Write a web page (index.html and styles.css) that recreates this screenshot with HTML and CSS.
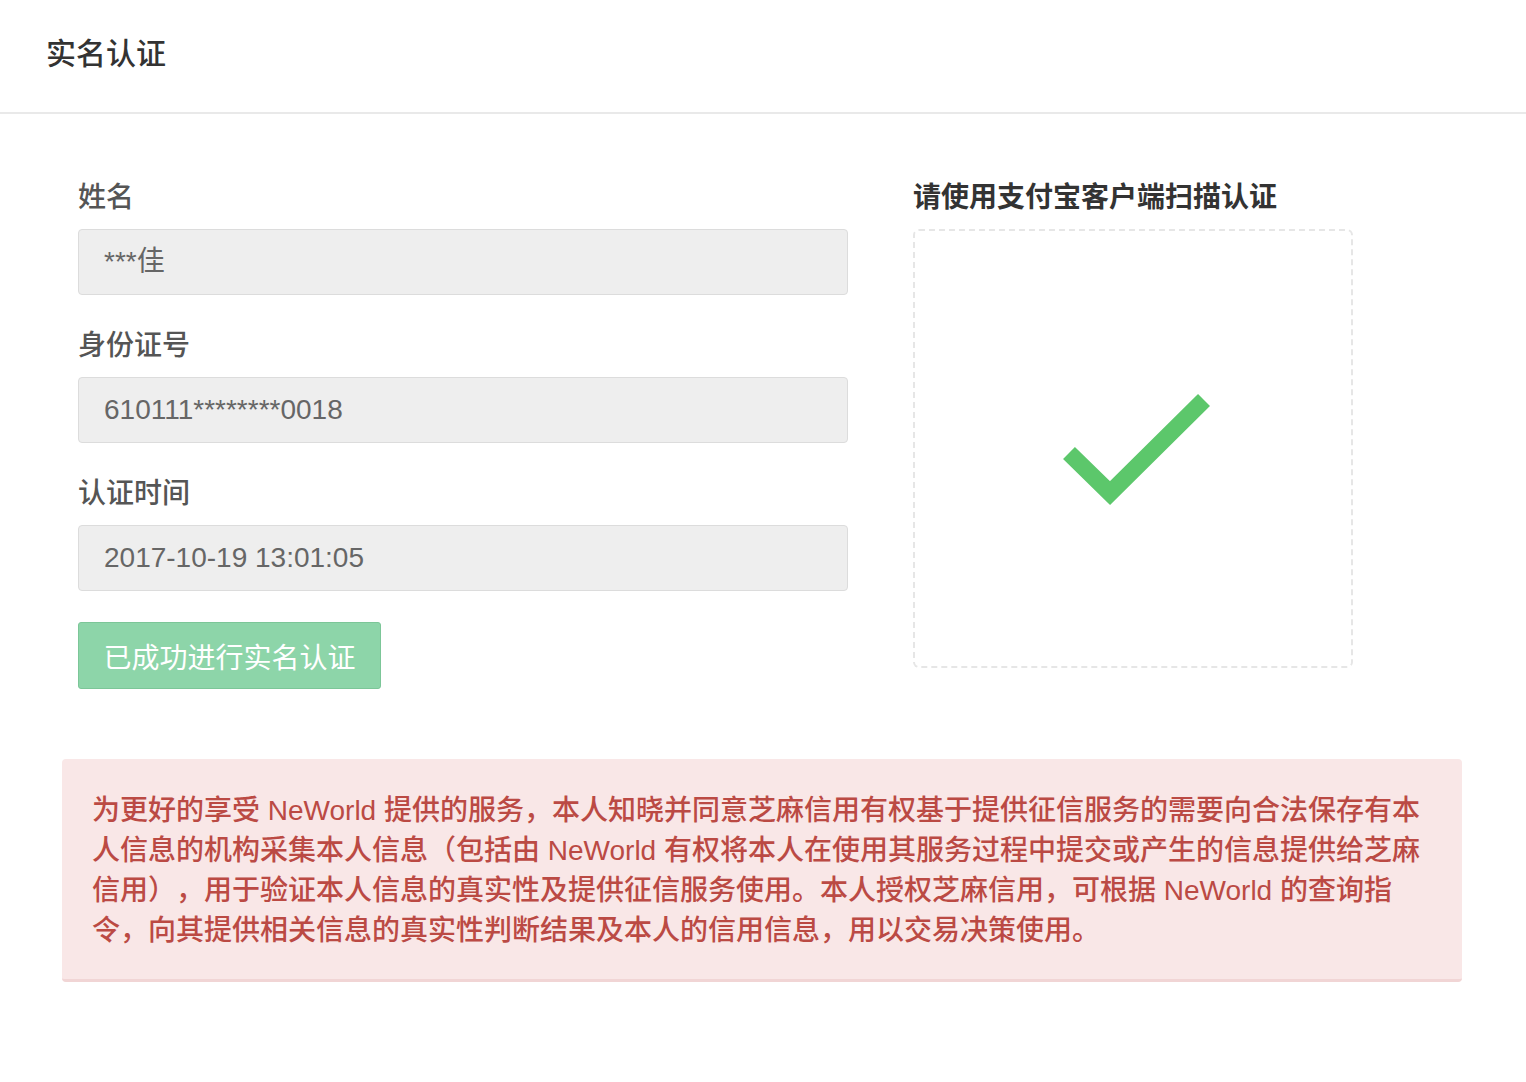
FILE: index.html
```html
<!DOCTYPE html>
<html lang="zh-CN">
<head>
<meta charset="utf-8">
<title>实名认证</title>
<link rel="stylesheet" href="styles.css">
</head>
<body>
<header class="page-header">
  <h1 class="page-title">实名认证</h1>
</header>
<main class="page-main">
  <section class="verify-row">
    <div class="form-col">
      <div class="field">
        <div class="field-label">姓名</div>
        <div class="field-input">***佳</div>
      </div>
      <div class="field">
        <div class="field-label">身份证号</div>
        <div class="field-input">610111********0018</div>
      </div>
      <div class="field">
        <div class="field-label">认证时间</div>
        <div class="field-input">2017-10-19 13:01:05</div>
      </div>
      <button class="btn-success" type="button">已成功进行实名认证</button>
    </div>
    <div class="qr-col">
      <div class="field-label qr-title">请使用支付宝客户端扫描认证</div>
      <div class="qr-box">
        <svg class="check" width="150" height="114" viewBox="0 0 150 114" aria-hidden="true">
          <polyline points="8,60 49,100 143,7" fill="none" stroke="#5cc76b" stroke-width="17" stroke-linecap="butt" stroke-linejoin="miter"/>
        </svg>
      </div>
    </div>
  </section>
  <div class="alert">为更好的享受 NeWorld 提供的服务，本人知晓并同意芝麻信用有权基于提供征信服务的需要向合法保存有本人信息的机构采集本人信息（包括由 NeWorld 有权将本人在使用其服务过程中提交或产生的信息提供给芝麻信用），用于验证本人信息的真实性及提供征信服务使用。本人授权芝麻信用，可根据 NeWorld 的查询指令，向其提供相关信息的真实性判断结果及本人的信用信息，用以交易决策使用。</div>
</main>
</body>
</html>
```

FILE: styles.css
```css
* { box-sizing: border-box; }
html, body {
  margin: 0;
  padding: 0;
  background: #fff;
}
body {
  font-family: "Liberation Sans", "Noto Sans CJK SC", sans-serif;
  color: #333;
  text-spacing-trim: space-all;
}
.page-header {
  height: 114px;
  border-bottom: 2px solid #e9e9e9;
  display: flex;
  align-items: center;
  padding: 0 46px 0 46px;
}
.page-title {
  margin: 0 0 4px 0;
  font-size: 30px;
  line-height: 40px;
  font-weight: 500;
  color: #333;
}
.page-main {
  padding: 64px 62px 60px 62px;
}
.verify-row {
  display: flex;
  gap: 65px;
  padding-left: 16px;
}
.form-col {
  width: 770px;
  display: flex;
  flex-direction: column;
}
.field {
  margin-bottom: 31px;
}
.field-label {
  font-size: 28px;
  line-height: 40px;
  font-weight: 500;
  color: #555;
  margin-bottom: 11px;
}
.field-input {
  height: 66px;
  background: #eee;
  border: 1px solid #dcdcdc;
  border-radius: 4px;
  padding: 0 25px;
  font-size: 28px;
  line-height: 64px;
  color: #666;
}
.btn-success {
  align-self: flex-start;
  width: 303px;
  height: 67px;
  background: #8dd5a9;
  border: 1px solid #7cc698;
  border-radius: 3px;
  color: #fff;
  font-family: inherit;
  font-size: 28px;
  padding: 0;
  margin: 0;
}
.qr-col {
  width: 440px;
}
.qr-title {
  color: #333;
  font-weight: 600;
}
.qr-box {
  height: 439px;
  border: 2px dashed #e6e6e6;
  border-radius: 6px;
  display: flex;
  align-items: center;
  justify-content: center;
}
.check {
  display: block;
  margin: 2px 0 0 5px;
}
.alert {
  margin-top: 70px;
  width: 1400px;
  background: #f9e7e7;
  border-bottom: 3px solid #f1d5d5;
  border-radius: 4px;
  padding: 32px 20px 28px 30px;
  font-size: 28px;
  line-height: 40px;
  font-weight: 500;
  color: #bb4a44;
}
```
